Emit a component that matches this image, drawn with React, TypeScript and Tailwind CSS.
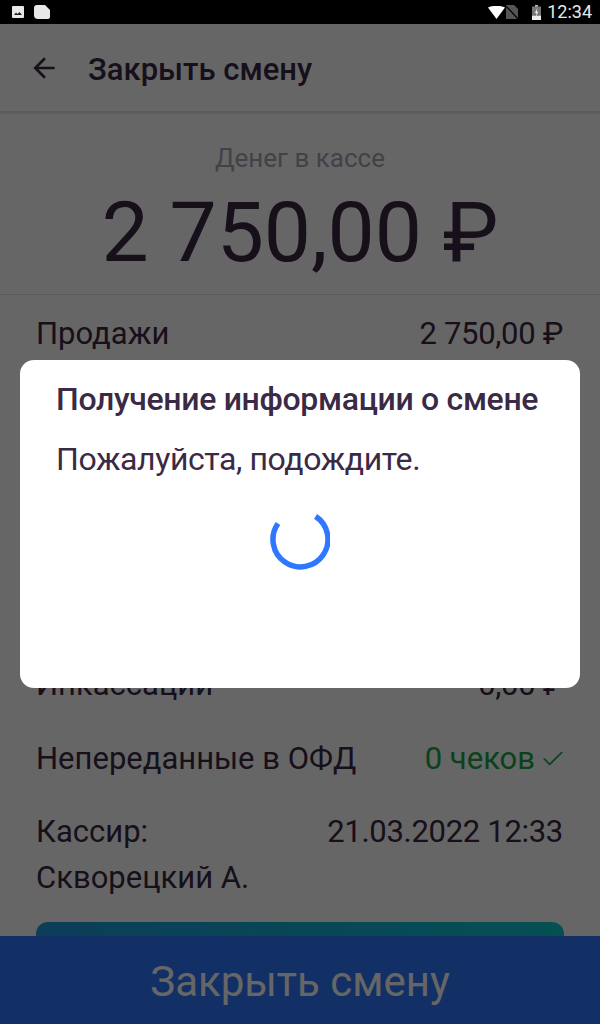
import React from 'react';
import { Check } from 'lucide-react';

const rowText = 'text-[31px] leading-[40px]';

const Row: React.FC<{ label: string; value: string; className?: string }> = ({ label, value, className }) => (
  <div className={`flex items-center justify-between h-[40px] ${rowText} ${className ?? ''}`}>
    <span>{label}</span>
    <span className="tracking-[-0.3px]">{value}</span>
  </div>
);

const StatusBar = () => (
  <div className="h-6 bg-black flex items-center justify-between pl-[12px] pr-[8px] shrink-0">
    <div className="flex items-center gap-[10px]">
      <svg width="12" height="12" viewBox="0 0 12 12">
        <rect x="0" y="0" width="12" height="12" rx="1" fill="#e8e8e8" />
        <path d="M2 9 L4 6.5 L5.5 8 L7.5 6 L10 9 Z" fill="#222" />
      </svg>
      <svg width="16" height="14" viewBox="0 0 16 14">
        <path d="M3 0 H11 L16 5 V12 Q16 14 14 14 H4 Q0 14 0 10 V3 Q0 0 3 0 Z" fill="#e8e8e8" />
      </svg>
    </div>
    <div className="flex items-center">
      <svg width="17" height="13" viewBox="0 0 17 13" className="mr-[1px]">
        <path d="M0 1.5 Q8.5 -2 17 1.5 L8.5 13 Z" fill="#ffffff" />
      </svg>
      <svg width="12" height="14" viewBox="0 0 12 14" className="mr-[14px]">
        <path d="M0 14 V0 H8 L12 4 V14 Z" fill="#555555" />
        <path d="M0 1 L12 14" stroke="#000" strokeWidth="1.2" />
      </svg>
      <svg width="9" height="15" viewBox="0 0 9 15" className="mr-[6px]">
        <rect x="3" y="0" width="3" height="2" fill="#bbb" />
        <rect x="0" y="1.5" width="9" height="9" fill="#777" />
        <rect x="0" y="10.5" width="9" height="4.5" fill="#eee" />
        <path d="M5.2 3 L3 8 H4.6 L3.8 12 L6.2 6.8 H4.6 Z" fill="#fff" />
      </svg>
      <span className="text-[18px] leading-6 text-[#e8e8e8]">12:34</span>
    </div>
  </div>
);

export default function App() {
  return (
    <div className="w-[600px] h-[1024px] flex flex-col overflow-hidden bg-white text-[#3b2a45] font-['Roboto',sans-serif]">
      <StatusBar />
      <div className="relative flex-1 flex flex-col min-h-0">
        <header className="h-[88px] shrink-0 flex items-center pl-[28px] border-b border-[#e0e0e0] shadow-sm">
          <svg width="32" height="32" viewBox="0 0 24 24" fill="currentColor" className="mr-[28px]">
            <path d="M20 11H7.83l5.59-5.59L12 4l-8 8 8 8 1.41-1.41L7.83 13H20v-2z" />
          </svg>
          <h1 className="text-[31px] font-medium leading-none mt-[4px]">Закрыть смену</h1>
        </header>

        <div className="flex-1 min-h-0 overflow-hidden">
          <div className="h-[183px] flex flex-col items-center border-b border-[#e0e0e0]">
            <div className="mt-[28px] text-[26px] leading-[36px] text-[#a8a4b4]">Денег в кассе</div>
            <div className="mt-[9px] text-[84px] leading-[96px]">2 750,00 ₽</div>
          </div>

          <div className="pl-[36px] pr-[37px] pt-[19px]">
            <Row label="Продажи" value="2 750,00 ₽" />
            {/* строки под диалогом в кадре не видны */}
            <Row label="Инкассации" value="0,00 ₽" className="mt-[311px]" />

            <div className={`flex items-center justify-between h-[40px] mt-[34px] ${rowText}`}>
              <span>Непереданные в ОФД</span>
              <span className="flex items-center text-[#19a546]">
                0 чеков
                <Check size={26} strokeWidth={1.6} className="ml-[5px] -mr-[3px]" />
              </span>
            </div>

            <div className="flex justify-between mt-[30px] text-[31px] leading-[46px]">
              <span>
                Кассир:
                <br />
                Скворецкий А.
              </span>
              <span className="tracking-[-0.3px]">21.03.2022 12:33</span>
            </div>

            <div className="h-[80px] mt-[21px] -mr-px rounded-t-[12px] bg-gradient-to-r from-[#1e9adf] to-[#0ec8d0]" />
          </div>
        </div>

        <button className="h-[88px] shrink-0 bg-[#2d78ff] text-white text-[42px] leading-none pt-[3px]">Закрыть смену</button>

        {/* затемнение и диалог загрузки */}
        <div className="absolute inset-0 bg-black/60 flex items-center justify-center">
          <div className="w-[560px] h-[328px] bg-white rounded-[14px] pl-[36px] pr-[30px] pt-[19px]">
            <div className="text-[32px] tracking-[-0.33px] font-medium leading-[40px] whitespace-nowrap">Получение информации о смене</div>
            <div className="mt-[20px] text-[32px] tracking-[-0.4px] leading-[40px]">Пожалуйста, подождите.</div>
            <div className="flex justify-center mt-[31px] -ml-[6px]">
              <svg width="60" height="60" viewBox="0 0 60 60">
                <path
                  d="M45.6 6.4 A27.5 27.5 0 1 1 8 13.5"
                  fill="none"
                  stroke="#2d78ff"
                  strokeWidth="5.5"
                />
              </svg>
            </div>
          </div>
        </div>
      </div>
    </div>
  );
}
